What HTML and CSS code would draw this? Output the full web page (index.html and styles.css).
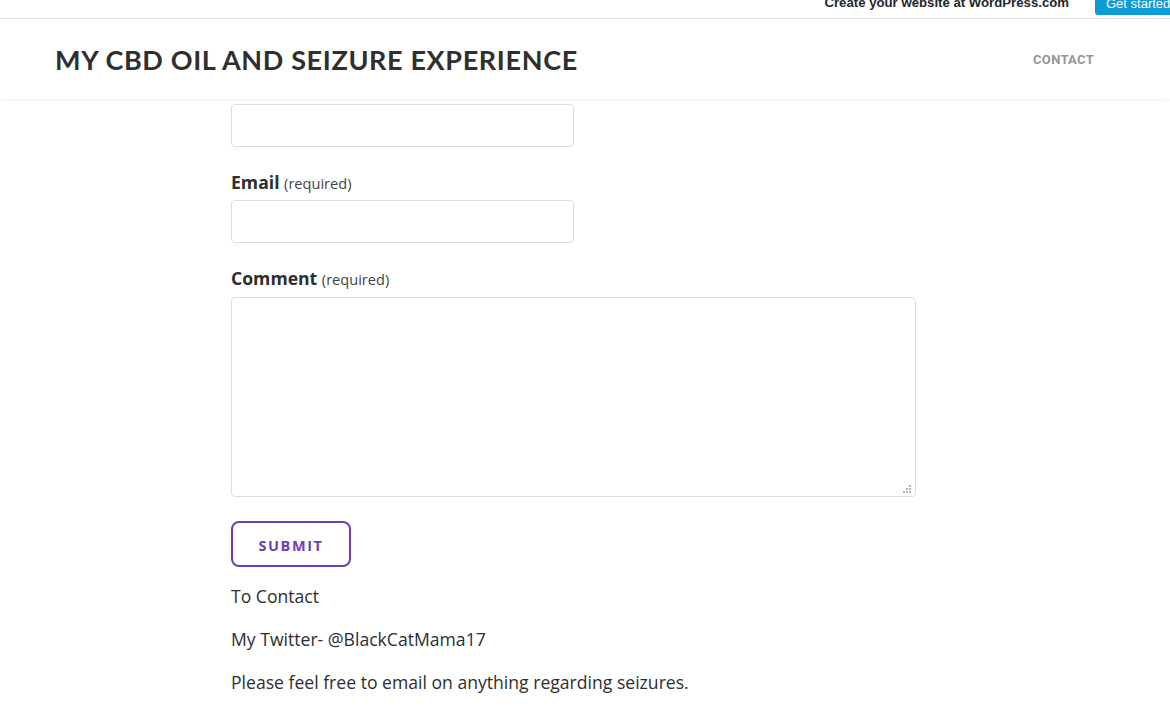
FILE: index.html
```html
<!DOCTYPE html>
<html lang="en">
<head>
<meta charset="utf-8">
<title>My CBD Oil and Seizure Experience</title>
<link rel="stylesheet" href="styles.css">
</head>
<body>
<div class="wpbar">
  <span class="wpbar-text">Create your website at WordPress.com</span>
  <span class="wpbar-btn">Get started</span>
</div>
<header class="site-header">
  <h1 class="site-title">MY CBD OIL AND SEIZURE EXPERIENCE</h1>
  <nav class="site-nav"><a href="#">CONTACT</a></nav>
</header>
<main class="content">
  <form class="contact-form">
    <input class="field" type="text">
    <label class="label">Email <span class="req">(required)</span></label>
    <input class="field" type="email">
    <label class="label">Comment <span class="req">(required)</span></label>
    <div class="area-wrap">
      <textarea class="area"></textarea>
      <svg class="grip" width="9" height="9" viewBox="0 0 9 9" aria-hidden="true">
        <rect x="6" y="0" width="2" height="2" fill="#b3b3b3"/>
        <rect x="3" y="3" width="2" height="2" fill="#b3b3b3"/>
        <rect x="6" y="3" width="2" height="2" fill="#b3b3b3"/>
        <rect x="0" y="6" width="2" height="2" fill="#b3b3b3"/>
        <rect x="3" y="6" width="2" height="2" fill="#b3b3b3"/>
        <rect x="6" y="6" width="2" height="2" fill="#b3b3b3"/>
      </svg>
    </div>
    <button class="submit" type="button">SUBMIT</button>
  </form>
  <p class="para">To Contact</p>
  <p class="para">My Twitter- @BlackCatMama17</p>
  <p class="para">Please feel free to email on anything regarding seizures.</p>
</main>
</body>
</html>
```
FILE: styles.css
```css
html, body {
  margin: 0;
  padding: 0;
  background: #fff;
}
body {
  font-family: "Open Sans", "Lato", sans-serif;
  color: #2e2e2e;
  overflow: hidden;
}
.wpbar {
  height: 18px;
  border-bottom: 1px solid #dcdfe3;
  display: flex;
  justify-content: flex-end;
  align-items: flex-end;
  overflow: hidden;
  background: #fff;
}
.wpbar-text {
  font-family: "Liberation Sans", sans-serif;
  font-weight: bold;
  font-size: 13.2px;
  color: #23282d;
  line-height: 18px;
  position: relative;
  top: -6px;
  margin-right: 26px;
}
.wpbar-btn {
  font-family: "Liberation Sans", sans-serif;
  font-size: 13px;
  color: #fff;
  background: #0c9bd5;
  border-radius: 3px;
  padding: 8px 12px 2px 11px;
  line-height: 18px;
  margin-bottom: 3px;
  margin-right: -18px;
  height: 20px;
  display: flex;
  align-items: flex-end;
  white-space: nowrap;
  width: 70px;
  overflow: hidden;
}
.site-header {
  height: 80px;
  display: flex;
  align-items: center;
  justify-content: space-between;
  padding: 0 76px 0 55px;
  box-shadow: 0 2px 3px rgba(0, 0, 0, 0.025);
  border-bottom: 1px solid #f6f6f6;
  position: relative;
}
.site-title {
  margin: 0;
  font-family: "Lato", sans-serif;
  font-size: 27px;
  font-weight: 700;
  letter-spacing: 0.64px;
  color: #2f2f2f;
}
.site-nav a {
  font-family: "Roboto", sans-serif;
  font-size: 13px;
  font-weight: 700;
  color: #959595;
  text-decoration: none;
  letter-spacing: 0.3px;
  position: relative;
  top: -1px;
}
.content {
  margin-left: 231px;
  width: 685px;
  padding-top: 4px;
}
.contact-form {
  display: flex;
  flex-direction: column;
  align-items: flex-start;
}
.field {
  box-sizing: border-box;
  width: 343px;
  height: 43px;
  border: 1px solid #dddddd;
  border-radius: 4px;
  margin: 0 0 22px 0;
  padding: 0 10px;
  font: inherit;
  background: #fff;
}
.label {
  font-size: 17.6px;
  font-weight: 700;
  line-height: 26px;
  margin-bottom: 4px;
  color: #2e2e2e;
}
.req {
  font-size: 14.6px;
  font-weight: 400;
  color: #444;
}
.area-wrap {
  position: relative;
  margin: 1px 0 24px 0;
}
.area {
  display: block;
  box-sizing: border-box;
  width: 685px;
  height: 200px;
  border: 1px solid #dddddd;
  border-radius: 4px;
  margin: 0;
  font: inherit;
  resize: none;
}
.grip {
  position: absolute;
  right: 4px;
  bottom: 3px;
}
.submit {
  box-sizing: border-box;
  width: 120px;
  height: 46px;
  border: 2px solid #6b3fb8;
  border-radius: 8px;
  background: #fff;
  color: #6b3fb8;
  font-family: inherit;
  font-size: 14.5px;
  font-weight: 700;
  letter-spacing: 1.6px;
  padding: 2px 0 0 0;
}
.para {
  font-size: 17.6px;
  line-height: 26px;
  margin: 16px 0 17px 0;
}
.para + .para {
  margin-top: 0;
}
```
